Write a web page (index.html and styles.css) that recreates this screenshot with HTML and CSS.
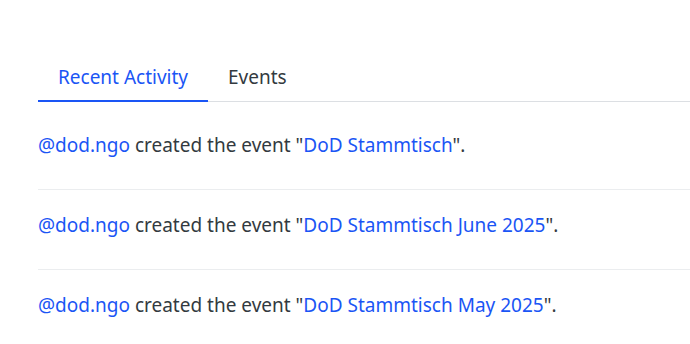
FILE: index.html
```html
<html lang="en">
<head>
  <meta charset="UTF-8">
  <meta name="viewport" content="width=device-width, initial-scale=1.0">
  <title>Activity</title>
  <link rel="stylesheet" href="styles.css">
</head>
<body>
  <div class="panel">
    <nav class="tabs">
      <a class="tab active" href="#">Recent Activity</a>
      <a class="tab" href="#">Events</a>
    </nav>
    <ul class="feed">
      <li><a href="#">@dod.ngo</a> created the event "<a href="#">DoD Stammtisch</a>".</li>
      <li><a href="#">@dod.ngo</a> created the event "<a href="#">DoD Stammtisch June 2025</a>".</li>
      <li><a href="#">@dod.ngo</a> created the event "<a href="#">DoD Stammtisch May 2025</a>".</li>
    </ul>
  </div>
</body>
</html>
```

FILE: styles.css
```css
body {
  margin: 0;
  font-family: "Noto Sans", sans-serif;
  font-size: 19px;
  line-height: 26px;
  color: #333a40;
  background: #fff;
  overflow: hidden;
}
a {
  color: #1a55f5;
  text-decoration: none;
}
.panel {
  margin: 52px -20px 0 38px;
}
.tabs {
  display: flex;
  border-bottom: 1px solid #dcdfe3;
}
.tab {
  padding: 12px 20px 10px;
  color: #333a40;
  border-bottom: 2px solid transparent;
  margin-bottom: -1px;
}
.tab.active {
  color: #1a55f5;
  border-bottom-color: #1a55f5;
}
.feed {
  list-style: none;
  margin: 8px 0 0;
  padding: 0;
}
.feed li {
  padding: 22px 0 31px;
  border-bottom: 1px solid #ebedef;
}
.feed li:last-child {
  border-bottom: none;
}
```
